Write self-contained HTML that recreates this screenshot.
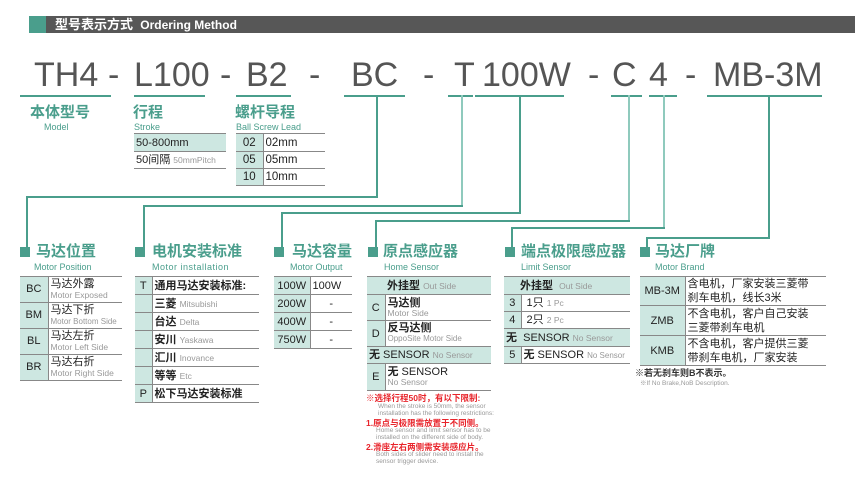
<!DOCTYPE html>
<html><head><meta charset="utf-8"><style>
*{margin:0;padding:0;box-sizing:border-box}
body{width:855px;height:487px;background:#fff;position:relative;overflow:hidden;font-family:"Liberation Sans","Noto Sans CJK SC",sans-serif;color:#222}
.a{position:absolute;white-space:nowrap}
.big{font-size:34px;color:#555;top:58px;line-height:34px}
.ul{position:absolute;height:1.5px;background:#4a9e8c;top:95px}
.vl{position:absolute;width:1.5px;background:#4a9e8c}
.hl{position:absolute;height:1.5px;background:#4a9e8c}
.ti{position:absolute;font-size:15px;font-weight:bold;color:#4a9e8c;line-height:17px}
.sub{position:absolute;font-size:9px;color:#4a9e8c;line-height:10px}
.sq{position:absolute;width:10px;height:10px;background:#4a9e8c;top:247px}
table{position:absolute;border-collapse:collapse;font-size:11px;line-height:12px;table-layout:fixed}
td{border-top:1.5px solid #888;border-bottom:1.5px solid #888;padding:0 2px;vertical-align:middle;white-space:nowrap;overflow:hidden}
td.k{background:#cde7e1;text-align:center;border-right:1.5px solid #888}
.g{color:#999;font-size:8.5px}
.r{color:#e8242b;font-size:8.5px;font-weight:bold}
.s{color:#999;font-size:6.5px;line-height:7px}
</style></head><body>
<div class="a" style="left:29px;top:16px;width:17px;height:17px;background:#4a9e8c"></div>
<div class="a" style="left:46px;top:16px;width:809px;height:17px;background:#575757"></div>
<div class="a" style="left:55px;top:16px;color:#fff;font-weight:bold;font-size:13px;line-height:17px">型号表示方式&nbsp;&nbsp;<span style="font-size:12px">Ordering Method</span></div>

<div class="a big" style="left:34px">TH4</div>
<div class="a big" style="left:108px">-</div>
<div class="a big" style="left:134px">L100</div>
<div class="a big" style="left:220px">-</div>
<div class="a big" style="left:246px">B2</div>
<div class="a big" style="left:309px">-</div>
<div class="a big" style="left:351px">BC</div>
<div class="a big" style="left:423px">-</div>
<div class="a big" style="left:454px">T</div>
<div class="a big" style="left:482px">100W</div>
<div class="a big" style="left:588px">-</div>
<div class="a big" style="left:612px">C</div>
<div class="a big" style="left:649px">4</div>
<div class="a big" style="left:685px">-</div>
<div class="a big" style="left:713px">MB-3M</div>

<div class="ul" style="left:20px;width:91px"></div>
<div class="ul" style="left:134px;width:71px"></div>
<div class="ul" style="left:236px;width:55px"></div>
<div class="ul" style="left:344px;width:61px"></div>
<div class="ul" style="left:448px;width:25px"></div>
<div class="ul" style="left:475px;width:89px"></div>
<div class="ul" style="left:611px;width:31px"></div>
<div class="ul" style="left:649px;width:28px"></div>
<div class="ul" style="left:707px;width:115px"></div>

<div class="vl" style="left:376px;top:95px;height:103px"></div>
<div class="hl" style="left:26px;top:196px;width:352px"></div>
<div class="vl" style="left:26px;top:196px;height:52px"></div>
<div class="vl" style="left:461px;top:95px;height:111px;background:#8fcabd"></div>
<div class="hl" style="left:143px;top:205px;width:320px"></div>
<div class="vl" style="left:143px;top:205px;height:43px"></div>
<div class="vl" style="left:519px;top:95px;height:118px"></div>
<div class="hl" style="left:281px;top:212px;width:240px"></div>
<div class="vl" style="left:281px;top:212px;height:36px"></div>
<div class="vl" style="left:628px;top:95px;height:126px;background:#8fcabd"></div>
<div class="hl" style="left:375px;top:220px;width:255px"></div>
<div class="vl" style="left:375px;top:220px;height:28px"></div>
<div class="vl" style="left:663px;top:95px;height:133px;background:#8fcabd"></div>
<div class="hl" style="left:511px;top:227px;width:154px"></div>
<div class="vl" style="left:511px;top:227px;height:21px"></div>
<div class="vl" style="left:768px;top:95px;height:144px"></div>
<div class="hl" style="left:646px;top:237px;width:124px"></div>
<div class="vl" style="left:646px;top:237px;height:11px"></div>

<div class="ti" style="left:30px;top:104px">本体型号</div>
<div class="sub" style="left:44px;top:122px">Model</div>
<div class="ti" style="left:133px;top:104px">行程</div>
<div class="sub" style="left:134px;top:122px">Stroke</div>
<div class="ti" style="left:235px;top:104px">螺杆导程</div>
<div class="sub" style="left:236px;top:122px">Ball Screw Lead</div>

<table style="left:134px;top:133px;width:92px">
<tr style="height:18px"><td style="background:#cde7e1;border-top:1px solid #888">50-800mm</td></tr>
<tr style="height:17px"><td>50间隔 <span class="g">50mmPitch</span></td></tr></table>
<table style="left:236px;top:133px;width:89px;font-size:11.5px">
<colgroup><col style="width:27px"><col style="width:62px"></colgroup>
<tr style="height:18px"><td class="k">02</td><td>02mm</td></tr>
<tr style="height:17px"><td class="k">05</td><td>05mm</td></tr>
<tr style="height:17px"><td class="k">10</td><td>10mm</td></tr></table>

<div class="sq" style="left:20px"></div><div class="ti" style="left:36px;top:243px">马达位置</div><div class="sub" style="left:34px;top:262px">Motor Position</div>
<div class="sq" style="left:135px"></div><div class="ti" style="left:152px;top:243px">电机安装标准</div><div class="sub" style="left:152px;top:262px;letter-spacing:.5px">Motor installation</div>
<div class="sq" style="left:274px"></div><div class="ti" style="left:292px;top:243px">马达容量</div><div class="sub" style="left:290px;top:262px">Motor Output</div>
<div class="sq" style="left:368px"></div><div class="ti" style="left:383px;top:243px">原点感应器</div><div class="sub" style="left:384px;top:262px">Home Sensor</div>
<div class="sq" style="left:505px"></div><div class="ti" style="left:521px;top:243px">端点极限感应器</div><div class="sub" style="left:521px;top:262px">Limit Sensor</div>
<div class="sq" style="left:640px"></div><div class="ti" style="left:655px;top:243px">马达厂牌</div><div class="sub" style="left:655px;top:262px">Motor Brand</div>

<table style="left:20px;top:276px;width:102px;line-height:11px">
<colgroup><col style="width:28px"><col style="width:74px"></colgroup>
<tr style="height:26px"><td class="k">BC</td><td>马达外露<br><span class="g">Motor Exposed</span></td></tr>
<tr style="height:26px"><td class="k">BM</td><td>马达下折<br><span class="g" style="font-size:8px">Motor Bottom Side</span></td></tr>
<tr style="height:26px"><td class="k">BL</td><td>马达左折<br><span class="g">Motor Left Side</span></td></tr>
<tr style="height:26px"><td class="k">BR</td><td>马达右折<br><span class="g">Motor Right Side</span></td></tr></table>

<table style="left:135px;top:276px;width:124px">
<colgroup><col style="width:17px"><col style="width:107px"></colgroup>
<tr style="height:18px"><td class="k">T</td><td><b>通用马达安装标准:</b></td></tr>
<tr style="height:18px"><td class="k"></td><td><b>三菱</b> <span class="g">Mitsubishi</span></td></tr>
<tr style="height:18px"><td class="k"></td><td><b>台达</b> <span class="g">Delta</span></td></tr>
<tr style="height:18px"><td class="k"></td><td><b>安川</b> <span class="g">Yaskawa</span></td></tr>
<tr style="height:18px"><td class="k"></td><td><b>汇川</b> <span class="g">Inovance</span></td></tr>
<tr style="height:18px"><td class="k"></td><td><b>等等</b> <span class="g">Etc</span></td></tr>
<tr style="height:18px"><td class="k">P</td><td><b>松下马达安装标准</b></td></tr></table>

<table style="left:274px;top:276px;width:78px">
<colgroup><col style="width:36px"><col style="width:42px"></colgroup>
<tr style="height:18px"><td class="k">100W</td><td>100W</td></tr>
<tr style="height:18px"><td class="k">200W</td><td style="text-align:center">-</td></tr>
<tr style="height:18px"><td class="k">400W</td><td style="text-align:center">-</td></tr>
<tr style="height:18px"><td class="k">750W</td><td style="text-align:center">-</td></tr></table>

<table style="left:367px;top:276px;width:124px;line-height:10px">
<colgroup><col style="width:18px"><col style="width:106px"></colgroup>
<tr style="height:18px"><td colspan="2" style="background:#cde7e1;padding-left:20px"><b>外挂型</b> <span class="g">Out Side</span></td></tr>
<tr style="height:26px"><td class="k">C</td><td><b>马达侧</b><br><span class="g">Motor Side</span></td></tr>
<tr style="height:26px"><td class="k">D</td><td><b>反马达侧</b><br><span class="g" style="font-size:8px">OppoSite Motor Side</span></td></tr>
<tr style="height:17px"><td colspan="2" style="background:#cde7e1"><b>无</b> SENSOR <span class="g">No Sensor</span></td></tr>
<tr style="height:27px"><td class="k">E</td><td><b>无</b> SENSOR<br><span class="g">No Sensor</span></td></tr></table>

<table style="left:504px;top:276px;width:126px">
<colgroup><col style="width:17px"><col style="width:109px"></colgroup>
<tr style="height:18px"><td colspan="2" style="background:#cde7e1;padding-left:16px"><b>外挂型</b> &nbsp;<span class="g">Out Side</span></td></tr>
<tr style="height:17px"><td class="k">3</td><td>&nbsp;1只 <span class="g">1 Pc</span></td></tr>
<tr style="height:17px"><td class="k">4</td><td>&nbsp;2只 <span class="g">2 Pc</span></td></tr>
<tr style="height:18px"><td colspan="2" style="background:#cde7e1"><b>无</b> &nbsp;SENSOR <span class="g">No Sensor</span></td></tr>
<tr style="height:17px"><td class="k">5</td><td><b>无</b> SENSOR <span class="g" style="font-size:8px">No Sensor</span></td></tr></table>

<table style="left:640px;top:276px;width:186px;line-height:14px">
<colgroup><col style="width:45px"><col style="width:141px"></colgroup>
<tr style="height:29px"><td class="k">MB-3M</td><td>含电机，厂家安装三菱带<br>刹车电机，线长3米</td></tr>
<tr style="height:30px"><td class="k">ZMB</td><td>不含电机，客户自己安装<br>三菱带刹车电机</td></tr>
<tr style="height:30px"><td class="k">KMB</td><td>不含电机，客户提供三菱<br>带刹车电机，厂家安装</td></tr></table>
<div class="a" style="left:635px;top:366px;font-size:9px;font-weight:bold;color:#333">※若无刹车则B不表示。</div>
<div class="a s" style="left:640px;top:380px">※If No Brake,NoB Description.</div>

<div class="a r" style="left:366px;top:392px">※选择行程50时，有以下限制:</div>
<div class="a s" style="left:378px;top:403px">When the stroke is 50mm, the sensor<br>installation has the following restrictions:</div>
<div class="a r" style="left:366px;top:417px">1.原点与极限需放置于不同侧。</div>
<div class="a s" style="left:376px;top:427px">Home sensor and limit sensor has to be<br>installed on the different side of body.</div>
<div class="a r" style="left:366px;top:441px">2.滑座左右两侧需安装感应片。</div>
<div class="a s" style="left:376px;top:451px">Both sides of slider need to install the<br>sensor trigger device.</div>
</body></html>
